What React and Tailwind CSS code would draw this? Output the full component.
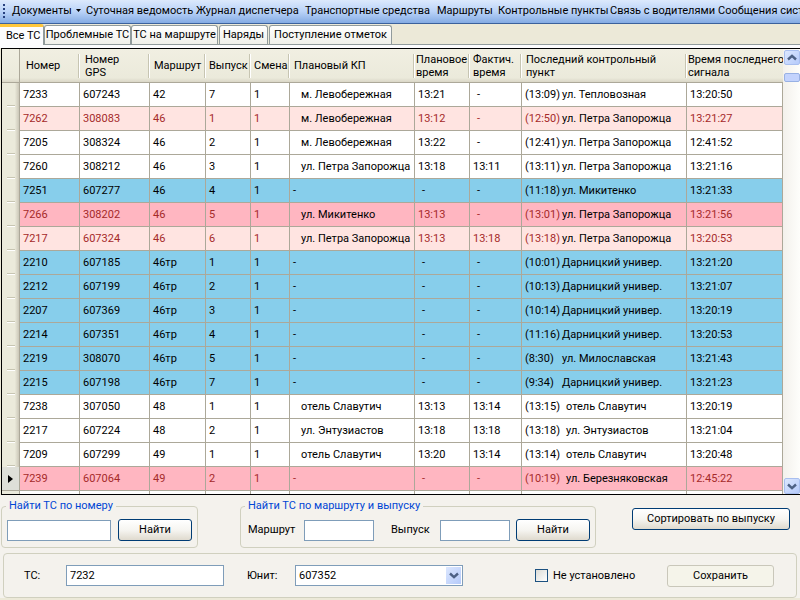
import React from 'react';

const TONES = {
  white: { row: 'bg-white', text: 'text-black' },
  blue: { row: 'bg-[#87ceeb]', text: 'text-black' },
  rose: { row: 'bg-[#ffe4e1]', text: 'text-[#a52a2a]' },
  pink: { row: 'bg-[#ffb6c1]', text: 'text-[#a52a2a]' },
};

// tone, number, gps, route, run, shift, planned stop, plan time, actual time, last time, last stop, signal
const ROWS = [
  ['white', '7233', '607243', '42', '7', '1', 'м. Левобережная', '13:21', '-', '(13:09)', 'ул. Тепловозная', '13:20:50'],
  ['rose', '7262', '308083', '46', '1', '1', 'м. Левобережная', '13:12', '-', '(12:50)', 'ул. Петра Запорожца', '13:21:27'],
  ['white', '7205', '308324', '46', '2', '1', 'м. Левобережная', '13:22', '-', '(12:41)', 'ул. Петра Запорожца', '12:41:52'],
  ['white', '7260', '308212', '46', '3', '1', 'ул. Петра Запорожца', '13:18', '13:11', '(13:11)', 'ул. Петра Запорожца', '13:21:16'],
  ['blue', '7251', '607277', '46', '4', '1', '-', '-', '-', '(11:18)', 'ул. Микитенко', '13:21:33'],
  ['pink', '7266', '308202', '46', '5', '1', 'ул. Микитенко', '13:13', '-', '(13:01)', 'ул. Петра Запорожца', '13:21:56'],
  ['rose', '7217', '607324', '46', '6', '1', 'ул. Петра Запорожца', '13:13', '13:18', '(13:18)', 'ул. Петра Запорожца', '13:20:53'],
  ['blue', '2210', '607185', '46тр', '1', '1', '-', '-', '-', '(10:01)', 'Дарницкий универ.', '13:21:20'],
  ['blue', '2212', '607199', '46тр', '2', '1', '-', '-', '-', '(10:13)', 'Дарницкий универ.', '13:21:07'],
  ['blue', '2207', '607369', '46тр', '3', '1', '-', '-', '-', '(10:14)', 'Дарницкий универ.', '13:20:19'],
  ['blue', '2214', '607351', '46тр', '4', '1', '-', '-', '-', '(11:16)', 'Дарницкий универ.', '13:20:53'],
  ['blue', '2219', '308070', '46тр', '5', '1', '-', '-', '-', '(8:30)', 'ул. Милославская', '13:21:43'],
  ['blue', '2215', '607198', '46тр', '7', '1', '-', '-', '-', '(9:34)', 'Дарницкий универ.', '13:21:23'],
  ['white', '7238', '307050', '48', '1', '1', 'отель Славутич', '13:13', '13:14', '(13:15)', 'отель Славутич', '13:20:19'],
  ['white', '2217', '607224', '48', '2', '1', 'ул. Энтузиастов', '13:18', '13:18', '(13:18)', 'ул. Энтузиастов', '13:21:04'],
  ['white', '7209', '607299', '49', '1', '1', 'отель Славутич', '13:20', '13:14', '(13:14)', 'отель Славутич', '13:20:48'],
  ['pink', '7239', '607064', '49', '2', '1', '-', '-', '-', '(10:19)', 'ул. Березняковская', '12:45:22'],
];

const HEADERS = [
  'Номер',
  'Номер\nGPS',
  'Маршрут',
  'Выпуск',
  'Смена',
  'Плановый КП',
  'Плановое\nвремя',
  'Фактич.\nвремя',
  'Последний контрольный\nпункт',
  'Время последнего\nсигнала',
];
const HEADER_PADS = ['pl-[6px]', 'pl-[5px]', 'pl-1', 'pl-[3px]', 'pl-[3px]', 'pl-1', 'pl-px', 'pl-[3px]', 'pl-1', 'pl-px'];

const MENU = ['Суточная ведомость', 'Журнал диспетчера', 'Транспортные средства', 'Маршруты', 'Контрольные пункты', 'Связь с водителями', 'Сообщения системы'];

const CELL = 'h-6 border-r border-b border-[#aca899] p-0 pt-px pl-[3px] whitespace-nowrap overflow-hidden';
const TAB = 'h-[19px] rounded-t-[3px] border border-b-0 border-[#919b9c] bg-linear-to-b from-white to-[#f0f0ea] whitespace-nowrap text-center';
const INPUT = 'h-[21px] border border-[#7f9db9] bg-white px-[3px] outline-none';
const BUTTON = 'h-[22px] rounded-[3px] border border-[#003c74] bg-linear-to-b from-white via-[#f6f5f1] to-[#dfdace] whitespace-nowrap';
const BOX = 'rounded-[4px] border border-[#d0d0bf]';

function Chevron({ up }) {
  return (
    <svg viewBox="0 0 10 7" className="h-[7px] w-[10px]" fill="none" stroke="#4d6185" strokeWidth="2.4" aria-hidden="true">
      <path d={up ? 'M1 5.5 5 1.8 9 5.5' : 'M1 1.5 5 5.2 9 1.5'} />
    </svg>
  );
}

function MenuBar() {
  return (
    <nav className="relative grid h-6 grid-cols-[74px_110px_109px_132px_61px_112px_108px_1fr] items-center overflow-hidden border-b border-[#3b619c] bg-linear-to-b from-[#dce9fc] via-[#bad3f8] to-[#84abe3] pl-3">
      <span className="absolute top-1 left-[3px] flex flex-col gap-[2px]" aria-hidden="true">
        {[0, 1, 2, 3].map((i) => (
          <i key={i} className="block size-[2px] bg-[#27417f]" />
        ))}
      </span>
      <button className="flex items-center gap-1 whitespace-nowrap pb-[2px]">
        Документы
        <svg viewBox="0 0 5 3" className="h-[3px] w-[5px]" aria-hidden="true">
          <path d="M0 0h5L2.5 3z" />
        </svg>
      </button>
      {MENU.map((m) => (
        <button key={m} className="whitespace-nowrap pb-[2px] text-left">
          {m}
        </button>
      ))}
    </nav>
  );
}

function Tabs() {
  return (
    <div className="flex h-[21px] items-end border-b border-[#919b9c]" role="tablist">
      <button role="tab" aria-selected="true" className="-mb-px h-[21px] w-[44px] rounded-tr-[3px] border-t-[3px] border-r border-t-[#ffc73c] border-r-[#919b9c] bg-[#fcfcfe] pl-[6px] text-left whitespace-nowrap">
        Все ТС
      </button>
      <button role="tab" aria-selected="false" className={TAB + ' w-[87px]'}>Проблемные ТС</button>
      <button role="tab" aria-selected="false" className={TAB + ' w-[87px]'}>ТС на маршруте</button>
      <button role="tab" aria-selected="false" className={TAB + ' ml-px w-[49px]'}>Наряды</button>
      <button role="tab" aria-selected="false" className={TAB + ' ml-px w-[123px]'}>Поступление отметок</button>
    </div>
  );
}

function RowHead({ current }) {
  if (current) {
    return (
      <td className="border-r border-b border-[#aca899] bg-[#dedfd8] p-0">
        <svg viewBox="0 0 5 8" className="ml-[6px] h-2 w-[5px]" aria-label="Текущая строка">
          <path d="M0 0 5 4 0 8z" />
        </svg>
      </td>
    );
  }
  return (
    <td className="h-6 border-r border-[#aca899] bg-linear-to-r from-[#ebeadb] from-75% to-[#cbc7b8] p-0 align-bottom">
      <span className="ml-[5px] block h-[2px] w-2 border-t border-b border-t-[#c7c5b2] border-b-white" />
    </td>
  );
}

function Grid() {
  return (
    <div className="ml-px flex border-t border-b border-l border-black">
      <table className="w-full table-fixed border-separate border-spacing-0">
        <colgroup>
          <col className="w-[18px]" />
          <col className="w-[60px]" />
          <col className="w-[70px]" />
          <col className="w-[56px]" />
          <col className="w-[45px]" />
          <col className="w-[39px]" />
          <col className="w-[125px]" />
          <col className="w-[55px]" />
          <col className="w-[52px]" />
          <col className="w-[165px]" />
          <col />
        </colgroup>
        <thead>
          <tr className="bg-linear-to-b from-[#f1efe2] via-[#ebeadb] via-85% to-[#d6d2c2]">
            <th className="border-r border-b border-[#aca899] p-0" />
            {HEADERS.map((h, i) => (
              <th key={h} className="h-[34px] border-b border-[#aca899] p-0 text-left font-normal">
                <div className="flex items-center leading-[13px]">
                  <span className={'flex-1 whitespace-pre ' + HEADER_PADS[i]}>{h}</span>
                  {i < 9 && <i className="-my-px h-6 w-[2px] border-r border-l border-l-[#c7c5b2] border-r-white" />}
                </div>
              </th>
            ))}
          </tr>
        </thead>
        <tbody>
          {ROWS.map((r, n) => {
            const tone = TONES[r[0]];
            const late = n > 12;
            return (
              <tr key={r[1]} className={tone.row + ' ' + tone.text}>
                <RowHead current={n === ROWS.length - 1} />
                {r.slice(1, 6).map((v, i) => (
                  <td key={i} className={CELL}>{v}</td>
                ))}
                <td className={CELL}>
                  {r[6] === '-' ? '-' : <span className="pl-2 text-black">{r[6]}</span>}
                </td>
                <td className={CELL}>{r[7] === '-' ? <span className="pl-1">-</span> : r[7]}</td>
                <td className={CELL}>{r[8] === '-' ? <span className="pl-1">-</span> : r[8]}</td>
                <td className={CELL}>
                  <span className={'inline-block ' + (late ? 'w-[41px]' : 'w-[37px]')}>{r[9]}</span>
                  <span className="text-black">{r[10]}</span>
                </td>
                <td className={CELL}>{r[11]}</td>
              </tr>
            );
          })}
          <tr className="bg-white">
            <td className="h-[3px] border-r border-[#aca899] bg-[#ebeadb] p-0" />
            {HEADERS.map((h) => (
              <td key={h} className="border-r border-[#aca899] p-0" />
            ))}
          </tr>
        </tbody>
      </table>
      <div className="flex w-[17px] shrink-0 flex-col bg-linear-to-r from-[#f3f1ec] to-[#fefefb] pt-px pl-px">
        <button aria-label="Вверх" className="flex h-[15px] items-center justify-center rounded-[2px] border border-[#a9bfef] bg-linear-to-br from-[#dce7fe] to-[#b5cafa]">
          <Chevron up />
        </button>
        <div className="mt-2 h-[9px] rounded-[2px] border border-[#98b1e4] bg-[#c3d3fd]" />
        <button aria-label="Вниз" className="mt-auto flex h-4 items-center justify-center rounded-[2px] border border-[#a9bfef] bg-linear-to-br from-[#dce7fe] to-[#b5cafa]">
          <Chevron />
        </button>
      </div>
    </div>
  );
}

function SearchPanel() {
  return (
    <div className="flex items-start pt-[5px] pr-[10px] pl-px">
      <fieldset className={BOX + ' w-[197px] pb-[6px]'}>
        <legend className="ml-1 px-[3px] leading-3 text-[#0046d5]">Найти ТС по номеру</legend>
        <div className="flex items-center gap-[7px] pt-[7px] pl-[5px]">
          <input aria-label="Номер ТС" className={INPUT + ' w-[104px]'} />
          <button className={BUTTON + ' w-[74px]'}>Найти</button>
        </div>
      </fieldset>
      <fieldset className={BOX + ' ml-[42px] w-[356px] pb-[6px]'}>
        <legend className="ml-1 px-[3px] leading-3 text-[#0046d5]">Найти ТС по маршруту и выпуску</legend>
        <div className="flex items-center pt-[7px] pl-[7px]">
          <label htmlFor="route" className="w-14">Маршрут</label>
          <input id="route" className={INPUT + ' w-[70px]'} />
          <label htmlFor="run" className="ml-[17px] w-[49px]">Выпуск</label>
          <input id="run" className={INPUT + ' w-[70px]'} />
          <button className={BUTTON + ' ml-[6px] w-[74px]'}>Найти</button>
        </div>
      </fieldset>
      <button className={BUTTON + ' mt-2 ml-auto w-[158px]'}>Сортировать по выпуску</button>
    </div>
  );
}

function UnitPanel() {
  return (
    <div className={BOX + ' mt-[5px] mr-[3px] ml-[3px] flex h-[45px] items-center pl-5'}>
      <label htmlFor="vehicle" className="w-[42px]">ТС:</label>
      <input id="vehicle" defaultValue="7232" className={INPUT + ' w-[158px]'} />
      <label htmlFor="unit" className="ml-[23px] w-12">Юнит:</label>
      <div className="relative">
        <select id="unit" className={INPUT + ' w-[168px] appearance-none'}>
          <option>607352</option>
        </select>
        <span className="pointer-events-none absolute top-[2px] right-[2px] flex h-[17px] w-[15px] items-center justify-center bg-linear-to-br from-[#dce7fe] to-[#b5cafa]">
          <Chevron />
        </span>
      </div>
      <label className="ml-[72px] flex items-center gap-[5px] whitespace-nowrap">
        <input type="checkbox" className="size-[13px] appearance-none border border-[#1c5180] bg-linear-to-br from-[#dcdcd7] to-white" />
        Не установлено
      </label>
      <button className="mr-[22px] ml-auto h-[22px] w-[107px] rounded-[3px] border border-[#c9c7ba] bg-[#f5f4ea]">Сохранить</button>
    </div>
  );
}

export default function App() {
  return (
    <div className="min-h-screen overflow-hidden bg-[#ece9d8] font-[Roboto,'DejaVu_Sans',sans-serif] text-[11px] leading-[14px] text-black">
      <MenuBar />
      <Tabs />
      <div className="h-[3px] bg-[#fcfcfe]" />
      <Grid />
      <div className="bg-[#f4f2ed]">
        <SearchPanel />
        <UnitPanel />
      </div>
    </div>
  );
}
